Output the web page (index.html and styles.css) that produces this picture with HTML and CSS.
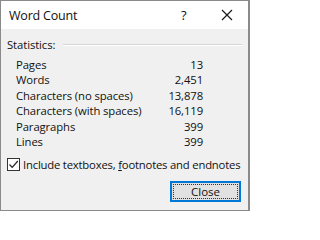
FILE: index.html
```html
<!DOCTYPE html>
<html>
<head>
<meta charset="utf-8">
<link rel="stylesheet" href="styles.css">
</head>
<body>
<div class="window">
  <div class="titlebar">
    <span class="title">Word Count</span>
    <span class="help">?</span>
    <span class="close-x"><svg width="12" height="12" viewBox="0 0 12 12"><path d="M1 1L11 11M11 1L1 11" stroke="#1a1a1a" stroke-width="1.2" fill="none"/></svg></span>
  </div>
  <div class="content">
    <div class="group-head"><span>Statistics:</span><span class="rule"></span></div>
    <div class="stats">
      <div class="row"><span>Pages</span><span>13</span></div>
      <div class="row"><span>Words</span><span>2,451</span></div>
      <div class="row"><span>Characters (no spaces)</span><span>13,878</span></div>
      <div class="row"><span>Characters (with spaces)</span><span>16,119</span></div>
      <div class="row"><span>Paragraphs</span><span>399</span></div>
      <div class="row"><span>Lines</span><span>399</span></div>
    </div>
    <label class="check">
      <span class="box"><svg width="11" height="11" viewBox="0 0 11 11"><path d="M1.5 5.5L4.2 8.3L9.8 2" stroke="#222" stroke-width="1.2" fill="none"/></svg></span>
      <span class="check-text">Include textboxes, <u>f</u>ootnotes and endnotes</span>
    </label>
    <div class="actions">
      <button class="btn"><span class="focus">Close</span></button>
    </div>
  </div>
</div>
</body>
</html>
```
FILE: styles.css
```css
html, body {
  margin: 0;
  padding: 0;
  background: #ffffff;
}
body {
  font-family: "Open Sans", "Noto Sans", sans-serif;
  font-size: 11.3px;
  color: #111111;
}
.window {
  width: 250px;
  height: 211px;
  box-sizing: border-box;
  border: 1px solid #8a8a8a;
  border-right-width: 2px;
  display: flex;
  flex-direction: column;
  background: #f0f0f0;
}
.titlebar {
  height: 28px;
  background: #ffffff;
  display: flex;
  align-items: center;
  flex: none;
}
.title {
  margin-left: 8px;
  font-size: 12.5px;
  letter-spacing: -0.2px;
  flex: 1;
}
.help {
  font-size: 13px;
  width: 12px;
  margin-right: 28px;
}
.close-x {
  display: flex;
  margin-right: 15px;
}
.content {
  flex: 1;
  padding: 8px 6px 0 6px;
  letter-spacing: -0.1px;
}
.group-head {
  display: flex;
  align-items: center;
  height: 15.5px;
  line-height: 15.5px;
}
.rule {
  flex: 1;
  height: 0;
  border-top: 1px solid #d5d5d5;
  border-bottom: 1px solid #ffffff;
  margin-left: 8px;
  margin-right: 0;
}
.stats {
  margin-top: 4px;
  padding-left: 9px;
  width: 187px;
}
.row {
  display: flex;
  justify-content: space-between;
  height: 15.5px;
  line-height: 15.5px;
}
.check {
  display: flex;
  align-items: center;
  margin-top: 7px;
  height: 15.5px;
  line-height: 15.5px;
}
.box {
  width: 11px;
  height: 11px;
  border: 1px solid #333333;
  background: #ffffff;
  display: flex;
  flex: none;
}
.check-text {
  margin-left: 3px;
  white-space: nowrap;
  letter-spacing: -0.2px;
}
.actions {
  display: flex;
  justify-content: flex-end;
  margin-top: 9px;
  padding-right: 1px;
}
.btn {
  width: 71px;
  height: 21px;
  box-sizing: border-box;
  border: 2px solid #0078d7;
  background: #e1e1e1;
  padding: 1px;
  display: flex;
  font-family: inherit;
  font-size: 11.5px;
  color: #111111;
}
.focus {
  flex: 1;
  border: 1px dotted #333333;
  display: flex;
  align-items: center;
  justify-content: center;
  line-height: 12px;
}
```
